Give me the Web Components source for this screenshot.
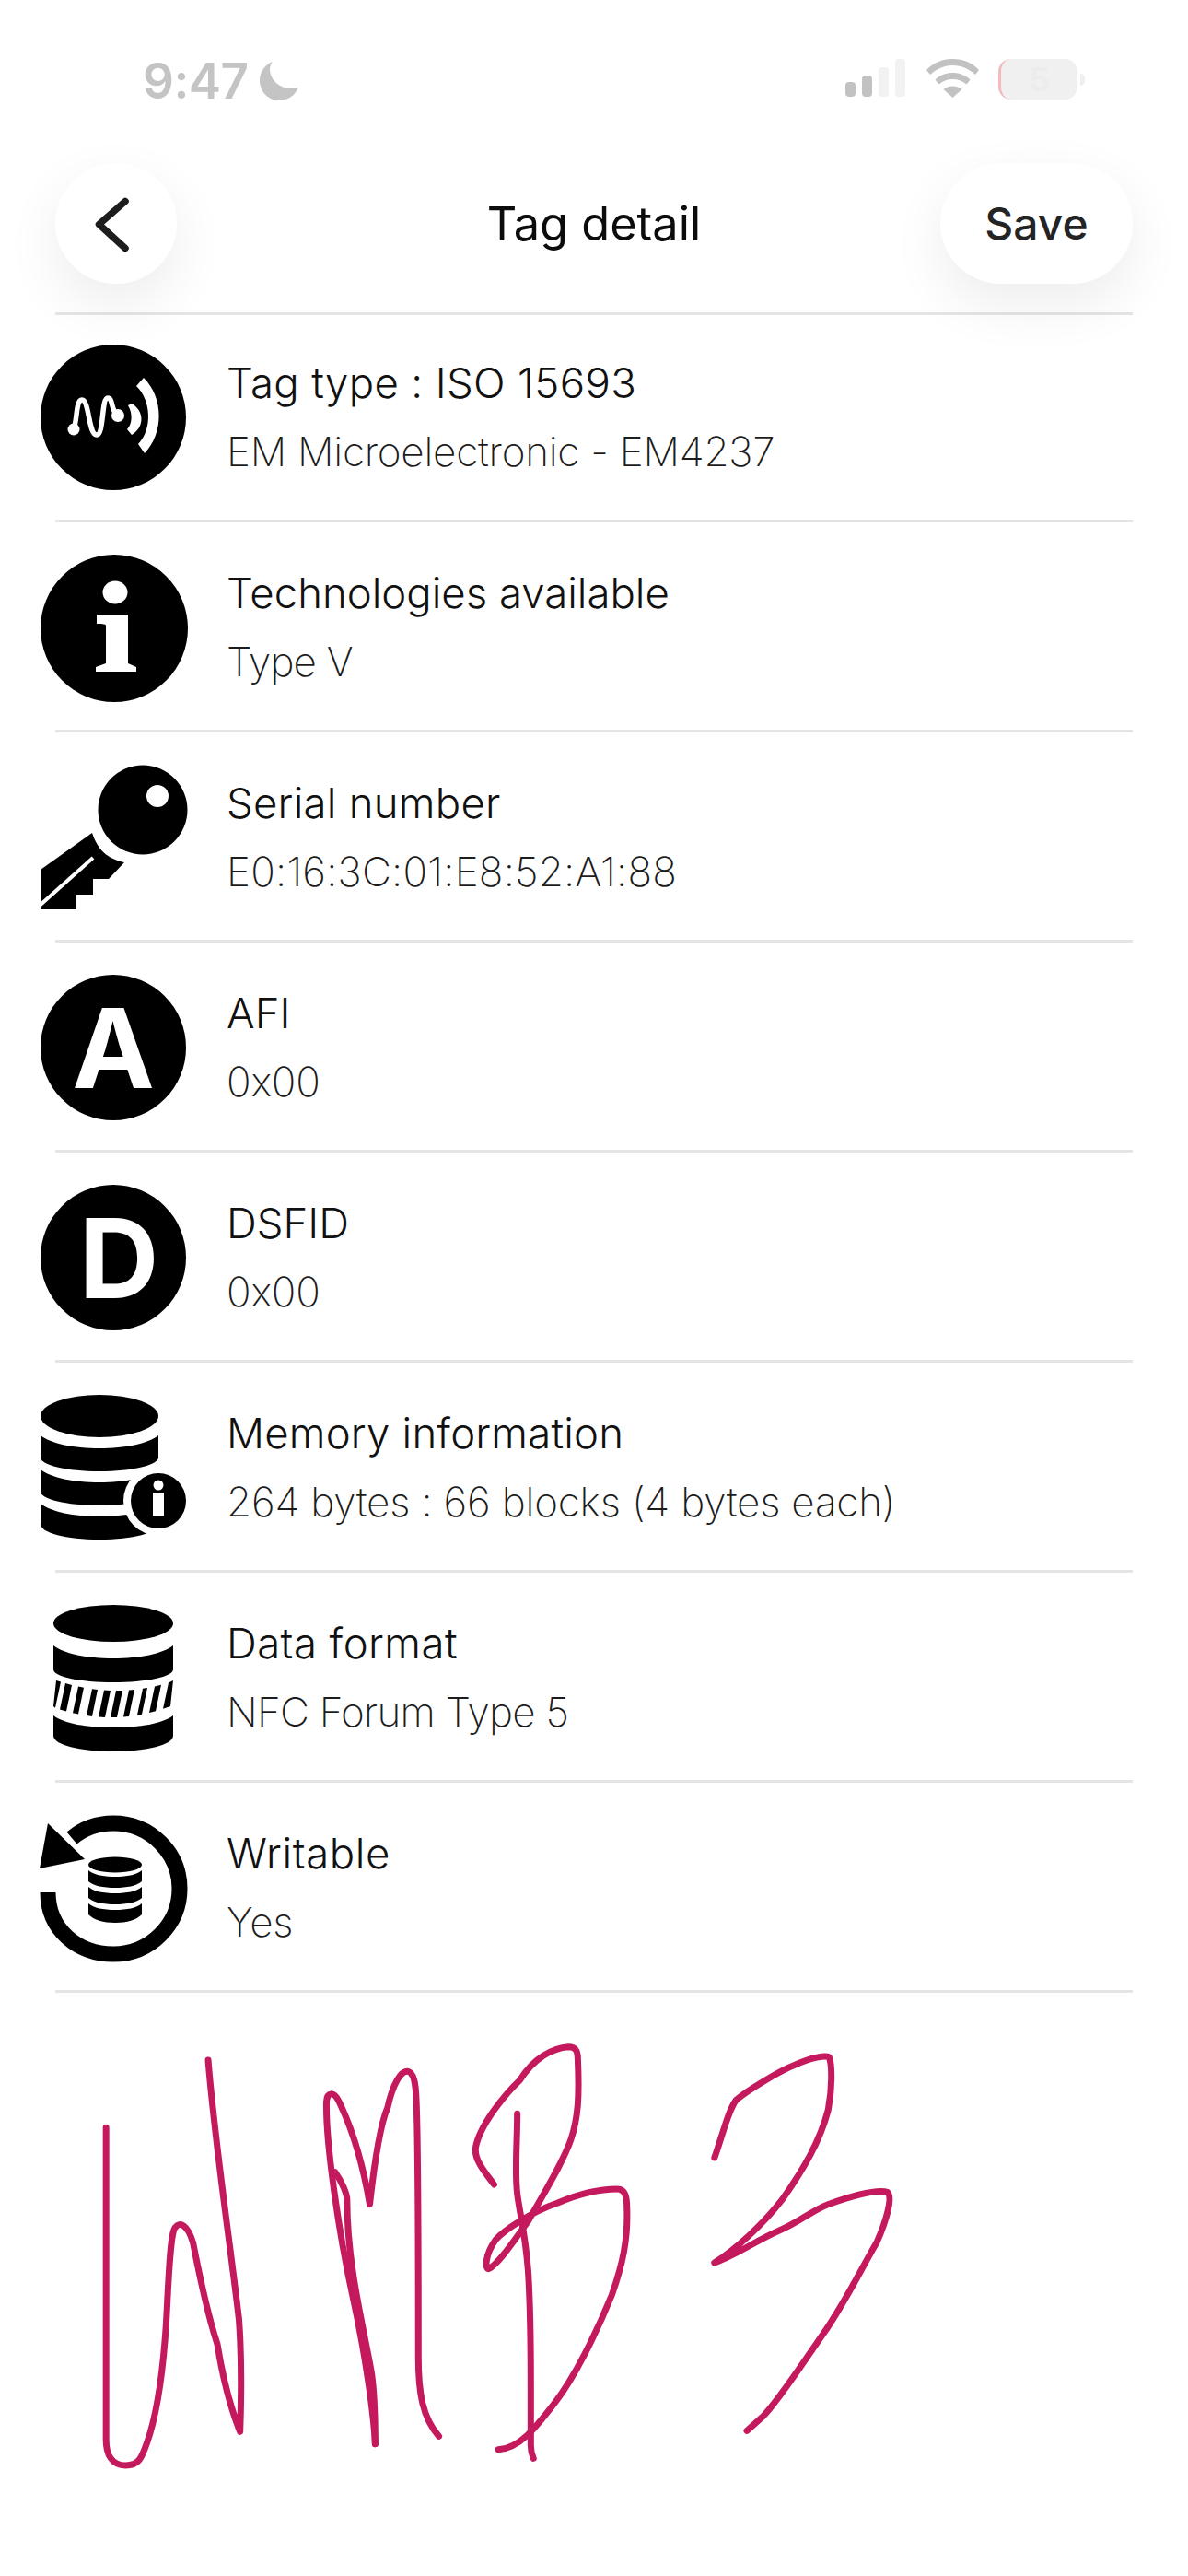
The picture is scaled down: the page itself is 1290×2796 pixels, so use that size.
<!DOCTYPE html>
<html lang="en"><head><meta charset="utf-8"><title>Tag detail</title>
<style>
html,body{margin:0;padding:0;background:#fff}
body{width:1290px;height:2796px;overflow:hidden;font-family:Inter,"Liberation Sans",sans-serif}
</style></head><body>
<app-screen>
  <status-bar></status-bar>
  <nav-header title="Tag detail" action="Save"></nav-header>
  <tag-row><tag-icon slot="icon" name="nfc"></tag-icon><span slot="title" style="letter-spacing:.35px">Tag type : ISO 15693</span><span slot="sub" style="letter-spacing:-.25px">EM Microelectronic - EM4237</span></tag-row>
  <tag-row><tag-icon slot="icon" name="info"></tag-icon><span slot="title">Technologies available</span><span slot="sub" style="letter-spacing:-.8px">Type V</span></tag-row>
  <tag-row><tag-icon slot="icon" name="key"></tag-icon><span slot="title" style="letter-spacing:.25px">Serial number</span><span slot="sub" style="letter-spacing:.23px">E0:16:3C:01:E8:52:A1:88</span></tag-row>
  <tag-row><tag-icon slot="icon" name="A"></tag-icon><span slot="title">AFI</span><span slot="sub">0x00</span></tag-row>
  <tag-row><tag-icon slot="icon" name="D"></tag-icon><span slot="title">DSFID</span><span slot="sub">0x00</span></tag-row>
  <tag-row><tag-icon slot="icon" name="dbinfo"></tag-icon><span slot="title" style="letter-spacing:.2px">Memory information</span><span slot="sub">264 bytes : 66 blocks (4 bytes each)</span></tag-row>
  <tag-row><tag-icon slot="icon" name="dbformat"></tag-icon><span slot="title" style="letter-spacing:.45px">Data format</span><span slot="sub" style="letter-spacing:-.75px">NFC Forum Type 5</span></tag-row>
  <tag-row><tag-icon slot="icon" name="dbwrite"></tag-icon><span slot="title" style="letter-spacing:.6px">Writable</span><span slot="sub">Yes</span></tag-row>
  <signature-pad></signature-pad>
</app-screen>
<script>
function shadow(el,html){el.attachShadow({mode:'open'}).innerHTML=html;}
customElements.define('app-screen',class extends HTMLElement{connectedCallback(){if(this.shadowRoot)return;shadow(this,`<style>:host{display:flex;flex-direction:column;width:1290px;font-family:Inter,"Liberation Sans",sans-serif}</style><slot></slot>`);}});

customElements.define('status-bar',class extends HTMLElement{connectedCallback(){if(this.shadowRoot)return;shadow(this,`<style>
:host{display:flex;align-items:flex-start;justify-content:space-between;height:177px;box-sizing:border-box;padding:62px 120px 0 155px}
.l{display:flex;align-items:flex-start;gap:12px}
.t{font:600 53px/52px Inter,"Liberation Sans",sans-serif;color:#c4c4c4;letter-spacing:-.5px}
.r{display:flex;align-items:flex-start;gap:21px;padding-top:2px}
.batt{position:relative;display:flex;width:86px;height:44px;box-sizing:border-box;background:#f0f0f0;border-left:3px solid #f3bcbc;border-radius:14px;align-items:center;justify-content:center;font:600 36px/44px Inter,sans-serif;color:#ececec}
.batt::after{content:"";position:absolute;right:-8px;top:16px;width:5px;height:13px;border-radius:0 5px 5px 0;background:#efefef}
svg{display:block}
</style>
<div class="l"><span class="t">9:47</span><svg width="42" height="42" viewBox="0 0 42 42" style="margin-top:5px"><path fill="#c4c4c4" d="M14 0C6 3 0 11 0 20c0 12 9 22 21 22 9 0 17-5 21-14-2 1-5 1-8 1C21 29 11 19 11 8c0-3 1-5 3-8z"/></svg></div>
<div class="r"><svg width="65" height="41" viewBox="0 0 65 41"><rect x="0" y="25" width="11" height="16" rx="4" fill="#c2c2c2"/><rect x="18" y="18" width="11" height="23" rx="4" fill="#c2c2c2"/><rect x="36" y="9" width="11" height="32" rx="4" fill="#f2f2f2"/><rect x="54" y="0" width="11" height="41" rx="4" fill="#f2f2f2"/></svg>
<svg width="57" height="42" viewBox="0 0 57 42" style="margin-left:2px"><path fill="#c2c2c2" d="M28.500 0C17 0 7.500 4 0 12l4 5c6.500-6 15-10 24.500-10S46.500 11 53 17l4-5C49.500 4 40 0 28.500 0z"/><path fill="#c2c2c2" d="M28.500 15c-7.500 0-14 2.500-19 7.500l4 5c4-3.500 9-5.500 15-5.500s11 2 15 5.500l4-5c-5-5-11.500-7.500-19-7.500z"/><path fill="#c2c2c2" d="M28.500 29.500c-4 0-7.500 1.300-10 3.500l10 9 10-9c-2.500-2.200-6-3.500-10-3.500z"/></svg>
<div class="batt">5</div></div>`);}});

customElements.define('nav-header',class extends HTMLElement{connectedCallback(){if(this.shadowRoot)return;shadow(this,`<style>
:host{display:block;padding:0 60px;margin-bottom:-3px}
.bar{display:flex;align-items:center;justify-content:space-between;height:131px;margin-bottom:31px;position:relative}
.btn{background:#fff;height:131px;border-radius:66px;box-shadow:0 22px 60px rgba(0,0,0,.075);display:flex;align-items:center;justify-content:center;box-sizing:border-box;color:#242424;font:500 48px/131px Inter,"Liberation Sans",sans-serif}
.back{width:132px}.save{width:209px}
.title{position:absolute;left:0;right:0;text-align:center;font:400 50.500px/131px Inter,"Liberation Sans",sans-serif;color:#0c0c0c;pointer-events:none}
.rule{height:3px;background:#e5e5e5}
</style>
<div class="bar"><div class="btn back"><svg width="132" height="131" viewBox="0 0 132 131"><path d="M76 41.500L47.500 66.500 76 92.500" fill="none" stroke="#1d1d1d" stroke-width="7.500" stroke-linecap="round" stroke-linejoin="round"/></svg></div>
<div class="title">${this.getAttribute('title')}</div>
<div class="btn save">${this.getAttribute('action')}</div></div><div class="rule"></div>`);}});

customElements.define('tag-row',class extends HTMLElement{connectedCallback(){if(this.shadowRoot)return;shadow(this,`<style>
:host{display:block}
.row{display:flex;align-items:center;height:225px;padding:2px 0 0 44px;box-sizing:border-box;gap:44px}
.txt{display:flex;flex-direction:column}
.ttl{font:350 45.500px/74px Inter,"Liberation Sans",sans-serif;color:#111}
.sub{font:200 44px/74px Inter,"Liberation Sans",sans-serif;letter-spacing:-.2px;color:#1c1c1c}
.rule{height:3px;margin:0 60px;background:#e5e5e5}
</style><div class="row"><slot name="icon"></slot><div class="txt"><div class="ttl"><slot name="title"></slot></div><div class="sub"><slot name="sub"></slot></div></div></div><div class="rule"></div>`);}});

const ICONS={
nfc:`<circle cx="79" cy="79" r="79"/>
<g fill="none" stroke="#fff" stroke-width="5.500" stroke-linecap="round"><path d="M36 91C40 84 38 60 45 60C53 60 52 98 61 98C69 98 66 58 73 58C79 58 76 72 84 77"/></g>
<circle cx="36" cy="92" r="6.500" fill="#fff"/><circle cx="84" cy="77" r="7" fill="#fff"/>
<path d="M95 66L99 64C113 72 113 90 99 98L94 92C100 86 100 74 95 66Z" fill="#fff"/>
<path d="M104 45L112 36C134 58 134 96 113 118L106 108C122 92 120 60 104 45Z" fill="#fff"/>`,
info:`<circle cx="80" cy="80" r="80"/><ellipse cx="81" cy="41" rx="13.500" ry="12.500" fill="#fff"/>
<path fill="#fff" d="M61 65H95V118L104 122V127H60V122L71 118V77C71 75 65 75 61 75Z"/>`,
key:`<circle cx="111" cy="49" r="48.500"/><ellipse cx="127" cy="34" rx="12" ry="12" fill="#fff"/>
<path d="M56 74L0 114V157H39V141H57V124H74L91 106C72 102 62 92 56 74Z"/><path d="M0 152L57 101" stroke="#fff" stroke-width="4" fill="none"/>`,
A:`<circle cx="79" cy="79" r="79"/><text x="79" y="123" text-anchor="middle" font-family="Inter,'Liberation Sans',sans-serif" font-weight="700" font-size="120" fill="#fff">A</text>`,
D:`<circle cx="79" cy="79" r="79"/><text x="85" y="123" text-anchor="middle" font-family="Inter,'Liberation Sans',sans-serif" font-weight="700" font-size="120" fill="#fff">D</text>`,
dbinfo:`<ellipse cx="64" cy="23" rx="64" ry="23"/>
<path d="M0 44C12 53 36 58 64 58S116 53 128 44V68C128 76 100 83 64 83S0 76 0 68Z"/>
<path d="M0 81C12 90 36 95 64 95S116 90 128 81V105C128 113 100 120 64 120S0 113 0 105Z"/>
<path d="M0 118C12 127 36 132 64 132S116 127 128 118V140C128 150 100 157 64 157S0 150 0 140Z"/>
<circle cx="128" cy="115" r="38" fill="#fff"/><circle cx="128" cy="115" r="30"/>
<ellipse cx="128" cy="98" rx="5.500" ry="5.500" fill="#fff"/><rect x="122" y="106" width="12" height="25" fill="#fff"/>`,
dbformat:`<ellipse cx="79" cy="20" rx="65" ry="20"/>
<path d="M14 44C26 53 50 58 79 58S132 53 144 44V70C144 78 115 84 79 84S14 78 14 70Z"/>
<path d="M14 120C26 129 50 133 79 133S132 129 144 120V142C144 152 115 159 79 159S14 152 14 142Z"/>__STRIPES__`,
dbwrite:`<path d="M8 84C8 124 40 151 79 151C119 151 151 119 151 80C151 41 119 9 79 9C62 9 47 14 34 25" fill="none" stroke="#000" stroke-width="17"/>
<path d="M8 9L-1 58L48 48Z"/>
<ellipse cx="81" cy="54" rx="29" ry="8.500"/>
<path d="M52 60C58 65 68 67 81 67S104 65 110 60V72C104 77 94 79 81 79S58 77 52 72Z"/>
<path d="M52 78C58 83 68 85 81 85S104 83 110 78V90C104 95 94 97 81 97S58 95 52 90Z"/>
<path d="M52 96C58 101 68 103 81 103S104 101 110 96V108C104 114 94 117 81 117S58 114 52 108Z"/>`
};
function stripes(){const xs=[[14,19],[24,31],[38,44],[53,59],[66,73],[79,86],[93,99],[108,113],[121,128],[136,144]];
 const top=x=>82+11*(1-Math.pow((x-79)/65,2)),bot=x=>110+12*(1-Math.pow((x-79)/65,2));
 return '<path d="'+xs.map(([a,b])=>{const l=3;return `M${Math.min(a+l,144)} ${top(a).toFixed(1)}L${Math.min(b+l,144)} ${top(b).toFixed(1)}L${b-l} ${bot(b).toFixed(1)}L${a-l<14?14:a-l} ${bot(a).toFixed(1)}Z`}).join('')+'"/>';}
customElements.define('tag-icon',class extends HTMLElement{connectedCallback(){if(this.shadowRoot)return;
 const n=this.getAttribute('name');
 shadow(this,`<style>:host{display:block;width:158px;height:160px;flex:none;margin-top:2px}svg{display:block;overflow:visible}</style><svg width="158" height="160" viewBox="0 0 158 160" fill="#000">${ICONS[n].replace('__STRIPES__',stripes())}</svg>`);}});

customElements.define('signature-pad',class extends HTMLElement{connectedCallback(){if(this.shadowRoot)return;
 shadow(this,`<style>:host{display:block;padding:28px 0 0 60px}svg{display:block;overflow:visible}path{fill:none;stroke:#c4195c;stroke-width:7;stroke-linecap:round;stroke-linejoin:round;vector-effect:non-scaling-stroke}</style>
 <svg width="920" height="520" viewBox="0 0 1568 1560" preserveAspectRatio="none">
 <path d="M94 355L94 1370C94 1420 105 1455 130 1455C155 1455 160 1430 170 1380C190 1280 200 1130 205 1000C210 850 212 700 222 680C230 660 245 670 255 730C265 820 285 980 300 1060C310 1170 325 1270 342 1345C345 1200 345 1100 340 980C325 750 295 400 283 135"/>
 <path d="M592 1385C590 1300 575 1100 550 900C525 700 500 400 502 270C503 240 515 235 525 270C550 360 570 480 582 605C590 480 600 350 615 290C625 210 640 170 652 172C665 175 667 220 668 260C672 400 672 800 672 1100C672 1220 680 1300 710 1360"/>
 <path d="M518 500C530 530 540 570 540 590C540 800 570 1000 585 1150C592 1230 592 1320 592 1385"/>
 <path d="M855 310C855 400 850 500 855 570C860 640 870 700 875 820C880 950 880 1100 880 1200L880 1390C880 1410 882 1420 885 1432"/>
 <path d="M812 540C795 500 775 460 778 420C785 350 830 250 860 200C885 130 920 95 950 92C965 92 967 110 967 130C970 250 968 320 955 390C940 470 900 580 875 660C850 720 820 800 802 815C795 815 795 770 815 720C830 690 880 630 930 600C970 570 1010 555 1040 555C1055 555 1058 580 1058 620C1060 720 1050 800 1030 900C1000 1030 960 1170 925 1250C890 1330 860 1400 820 1403"/>
 <path d="M1220 453C1235 380 1245 300 1260 265C1280 235 1340 170 1370 150C1400 125 1425 120 1432 125C1438 150 1438 230 1430 300C1415 400 1385 490 1345 590C1310 670 1260 750 1220 795C1260 770 1300 720 1340 690C1380 660 1400 625 1430 605C1470 580 1520 555 1540 565C1550 580 1540 650 1520 730C1490 820 1460 930 1420 1030C1380 1130 1340 1240 1310 1295L1280 1342"/>
 </svg>`);}});
</script>
</body></html>
